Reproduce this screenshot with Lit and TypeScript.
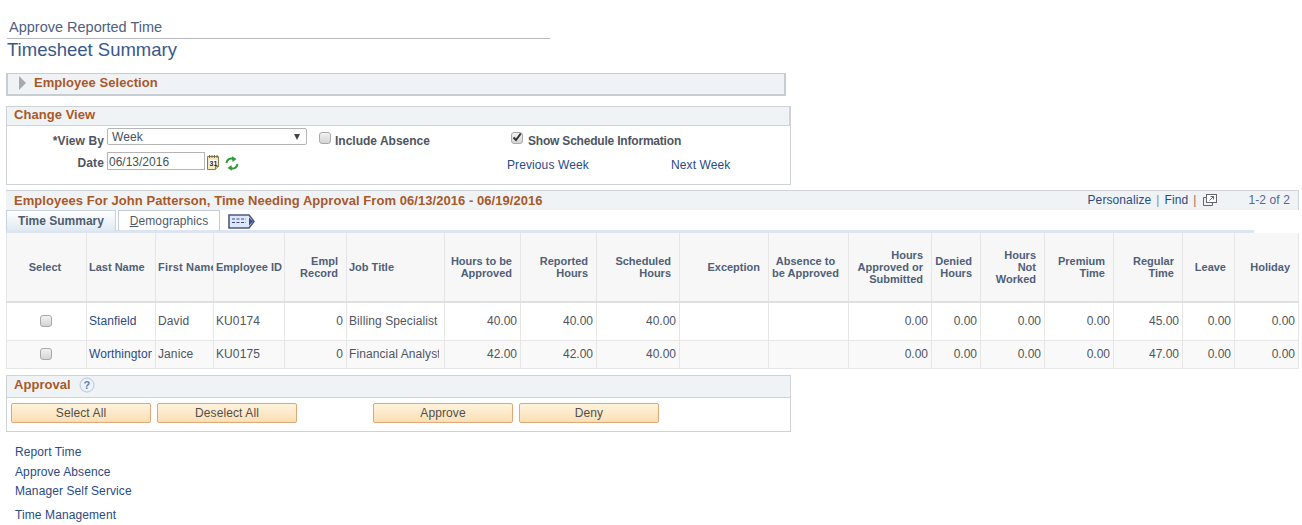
import { LitElement, html, css } from "lit";
import { customElement } from "lit/decorators.js";

const cols = [80, 69, 58, 71, 62, 98, 76, 76, 83, 89, 80, 83, 49, 64, 69, 69, 52, 64];
const heads: [string, string][] = [
  ["Select", "c sel-h"], ["Last Name", "l"], ["First Name", "l fn"], ["Employee ID", "l"], ["Empl<br>Record", "r"],
  ["Job Title", "l"], ["Hours to be<br>Approved", "r"], ["Reported<br>Hours", "r"], ["Scheduled<br>Hours", "r"],
  ["Exception", "r"], ["Absence to<br>be Approved", "c"], ["Hours<br>Approved or<br>Submitted", "r"],
  ["Denied<br>Hours", "r"], ["Hours<br>Not<br>Worked", "r"], ["Premium<br>Time", "r"], ["Regular<br>Time", "r"],
  ["Leave", "r"], ["Holiday", "r"],
];
const rows = [
  ["Stanfield", "David", "KU0174", "0", "Billing Specialist", "40.00", "40.00", "40.00", "", "", "0.00", "0.00", "0.00", "0.00", "45.00", "0.00", "0.00"],
  ["Worthington", "Janice", "KU0175", "0", "Financial Analyst", "42.00", "42.00", "40.00", "", "", "0.00", "0.00", "0.00", "0.00", "47.00", "0.00", "0.00"],
];

@customElement("app-root")
export class AppRoot extends LitElement {
  static styles = css`
    :host { display: block; width: 1302px; height: 525px; overflow: hidden; background: #fff; font-family: "Liberation Sans", Arial, sans-serif; font-size: 12px; color: #4f5560; letter-spacing: 0.1px; }
    a { color: #2a4a86; text-decoration: none; }
    .crumb { margin: 18px 0 0 7px; width: 543px; height: 21px; box-sizing: border-box; padding-left: 2px; border-bottom: 1px solid #b4b8bd; font-size: 14.5px; line-height: 19px; color: #50607f; letter-spacing: 0; }
    h1 { margin: 0 0 0 7px; font-weight: normal; font-size: 18.5px; line-height: 21px; height: 34px; box-sizing: border-box; color: #37598a; letter-spacing: 0; }
    .sel { margin: 0 0 0 6px; width: 780px; height: 23px; box-sizing: border-box; background: #f0f3f5; border: 1px solid #c8cdd4; border-width: 1px 2px 2px 2px; display: flex; align-items: center; gap: 8px; padding: 0 0 4px 11px; }
    .tri { width: 0; height: 0; margin-top: 2px; border-style: solid; border-width: 7px 0 7px 7px; border-color: transparent transparent transparent #a9a9a9; }
    .ttl { font-weight: bold; font-size: 13px; color: #a8592a; letter-spacing: 0.05px; }
    .cv { margin: 10px 0 0 6px; width: 785px; height: 79px; box-sizing: border-box; border: 1px solid #cfd3d8; }
    .cvh { height: 18px; background: #f0f3f5; border-bottom: 1px solid #cdd2d8; border-right: 1px solid #cdd2d8; padding-left: 7px; line-height: 15px; }
    .cvb { display: grid; grid-template-columns: 100px 208px 192px 164px 1fr; grid-template-rows: 24px 24px; padding-top: 3px; align-items: center; }
    .lab { font-weight: bold; text-align: right; padding-right: 3px; margin-bottom: 1px; }
    .lab.d { margin-bottom: 5px; }
    .selbox { width: 200px; height: 17px; align-self: start; margin-top: -1px; box-sizing: border-box; border: 1px solid #b5b5b5; border-radius: 2px; display: flex; align-items: center; justify-content: space-between; padding: 1px 6px 0 4px; color: #4a4f58; }
    .arr { width: 0; height: 0; margin-top: -1px; border-style: solid; border-width: 6px 3px 0 3px; border-color: #444 transparent transparent transparent; }
    .datewrap { display: flex; align-items: flex-start; align-self: start; margin-top: -1px; }
    .date { width: 98px; height: 18px; box-sizing: border-box; border: 1px solid #b5b5b5; padding: 2px 0 0 1px; color: #4a4f58; line-height: 14px; margin-right: 2px; letter-spacing: 0; }
    .cal { margin-top: 3px; }
    .ref { margin: 4px 0 0 5px; }
    .chk { appearance: none; display: block; width: 12px; height: 12px; box-sizing: border-box; margin: 0; border: 1px solid #a9a9a9; border-radius: 3px; background: linear-gradient(#f2f2f2, #d4d4d4); }
    .ck { display: flex; align-items: center; font-weight: bold; white-space: nowrap; padding-left: 4px; letter-spacing: 0; }
    .ck .chkw { position: relative; margin: 0 4px 7px 0; }
    .ck.s { letter-spacing: -0.2px; }
    .ck.s .chkw { margin-right: 5px; }
    .ck svg.tick { position: absolute; left: 1px; top: 0; }
    .grid { margin: 5px 0 0 6px; width: 1293px; height: 179px; box-sizing: border-box; }
    .gh { height: 20px; box-sizing: border-box; background: #f0f3f5; border-top: 1px solid #cfd3d8; border-right: 1px solid #cfd3d8; display: flex; align-items: center; padding: 0 8px 0 8px; }
    .gh .ttl { flex: 1; }
    .ghr { display: flex; align-items: center; margin-bottom: 2px; }
    .ghr .sep { margin: 0 5px; color: #888; }
    .ghr .sep.red { color: #a8694f; }
    .ghr .cnt { margin-left: 32px; color: #4e6a96; }
    .tabs { height: 20px; display: flex; align-items: stretch; gap: 2px; width: 1248px; border-bottom: 3px solid #dde6f0; }
    .tab { box-sizing: border-box; height: 21px; display: flex; align-items: center; justify-content: center; border: 1px solid #c4ccd6; border-bottom: none; }
    .tab.on { width: 110px; font-weight: bold; background: linear-gradient(#fff, #dfe9f3); border-color: #c9d3de; color: #4d5c70; letter-spacing: 0; }
    .tab.off { width: 102px; color: #4f5a6b; }
    .tabicon { margin: 4px 0 0 6px; }
    table { border-collapse: collapse; table-layout: fixed; width: 1292px; }
    th { height: 69px; box-sizing: border-box; padding: 0 8px 0 2px; background: #f7f7f7; border-left: 1px solid #e6e6e6; border-right: 1px solid #e6e6e6; border-bottom: 2px solid #e0e0e0; font-size: 11px; line-height: 12px; color: #4f5f79; font-weight: bold; white-space: nowrap; overflow: hidden; letter-spacing: 0; }
    th.sel-h { padding: 0 3px 0 0; }
    th.fn { letter-spacing: 0.2px; padding-right: 0; }
    td { box-sizing: border-box; padding: 0 3px 0 2px; border: 1px solid #e6e6e6; white-space: nowrap; }
    td div { overflow: hidden; }
    td:nth-child(6) div { margin-right: 2px; }
    tr.a td { height: 38px; background: #fff; }
    tr.b td { height: 28px; background: #f9f9f9; padding-bottom: 1px; }
    tr.b td.cb { padding-bottom: 0; }
    .c { text-align: center; }
    .l { text-align: left; }
    .r { text-align: right; }
    td.r { letter-spacing: 0; }
    td .chk { margin: auto; }
    .ap { margin: 6px 0 0 6px; width: 785px; height: 57px; box-sizing: border-box; border: 1px solid #cfd3d8; }
    .aph { height: 22px; background: #f0f3f5; border-bottom: 1px solid #cdd2d8; padding: 0 0 4px 7px; box-sizing: border-box; display: flex; align-items: center; gap: 8px; }
    .aph svg { margin-top: 1px; }
    .btns { display: flex; padding: 5px 0 0 4px; }
    .btn { width: 140px; height: 20px; box-sizing: border-box; border: 1px solid #e0a878; border-radius: 2px; background: linear-gradient(#fff3dc, #fbdfb4); color: #4f4f4f; display: flex; align-items: center; justify-content: center; padding-bottom: 1px; margin-right: 6px; }
    .btn.gapped { margin-left: 70px; }
    .links { margin: 13px 0 0 15px; display: flex; flex-direction: column; }
    .links a { line-height: 14px; height: 20px; }
    .links a.short { height: 19px; }
    .links a.last { margin-top: 4px; }
  `;

  render() {
    return html`
      <div class="crumb">Approve Reported Time</div>
      <h1>Timesheet Summary</h1>
      <div class="sel"><span class="tri"></span><span class="ttl">Employee Selection</span></div>
      <div class="cv">
        <div class="cvh"><span class="ttl">Change View</span></div>
        <div class="cvb">
          <div class="lab">*View By</div>
          <div class="selbox"><span>Week</span><span class="arr"></span></div>
          <label class="ck"><span class="chkw"><input class="chk" type="checkbox" /></span>Include Absence</label>
          <label class="ck s"><span class="chkw"><input class="chk" type="checkbox" /><svg class="tick" width="10" height="10" viewBox="0 0 10 10"><path d="M1.5 5.5 4 8 8.8 1.5" fill="none" stroke="#333" stroke-width="2"/></svg></span>Show Schedule Information</label>
          <div></div>
          <div class="lab d">Date</div>
          <div class="datewrap"><span class="date">06/13/2016</span>
            <svg class="cal" width="13" height="15" viewBox="0 0 13 15"><path d="M.5 1.5h11v10l-3 3H.5z" fill="#f5e9c0" stroke="#8d7a4a"/><path d="M2.5 0v3M5 0v3M7.5 0v3M10 0v3" stroke="#666"/><rect x="2.5" y="5" width="7" height="6" fill="#fff"/><text x="2.5" y="11" font-size="7" font-weight="bold" fill="#222" font-family="Liberation Sans">31</text><path d="M8.5 14.5v-3h3" fill="#e0cf9a" stroke="#8d7a4a"/></svg>
            <svg class="ref" width="14" height="15" viewBox="0 0 14 15"><path d="M1.5 7C2 3.5 5 1.8 8.5 3" fill="none" stroke="#2f9a3c" stroke-width="2"/><path d="M7 .2 11.5 3 7.5 6z" fill="#2f9a3c"/><path d="M12.5 8C12 11.5 9 13.2 5.5 12" fill="none" stroke="#2f9a3c" stroke-width="2"/><path d="M7 14.8 2.5 12 6.5 9z" fill="#2f9a3c"/></svg>
          </div>
          <div></div>
          <div><a href="#">Previous Week</a></div>
          <div><a href="#">Next Week</a></div>
        </div>
      </div>
      <div class="grid">
        <div class="gh"><span class="ttl">Employees For John Patterson, Time Needing Approval From 06/13/2016 - 06/19/2016</span>
          <div class="ghr"><a href="#">Personalize</a><span class="sep">|</span><a href="#">Find</a><span class="sep red">|</span>
            <svg width="15" height="14" viewBox="0 0 15 14"><rect x="4.5" y="1.5" width="10" height="8" fill="#fff" stroke="#666"/><path d="M4.5 4.5H1.5v8h9v-3" fill="none" stroke="#666"/><path d="M7.5 7.5l4-4M8.5 3.5h3v3" fill="none" stroke="#666"/></svg>
            <span class="cnt">1-2 of 2</span></div>
        </div>
        <div class="tabs">
          <div class="tab on">Time Summary</div>
          <div class="tab off"><span><u>D</u>emographics</span></div>
          <svg class="tabicon" width="27" height="15" viewBox="0 0 27 15"><path d="M1 1h20l5 6.5-5 6.5H1z" fill="#dfe8fb" stroke="#4d5880" stroke-width="1.6"/><path d="M4 5h14M4 8.500h14" stroke="#3c4c90" stroke-dasharray="3 1.500"/><path d="M21 3.500l4 4-4 4z" fill="#3c4c90"/></svg>
        </div>
        <table>
          <colgroup>${cols.map((w) => html`<col style="width:${w}px" />`)}</colgroup>
          <thead><tr>${heads.map(([t, a]) => html`<th class=${a} .innerHTML=${t}></th>`)}</tr></thead>
          <tbody>
            ${rows.map((r, i) => html`<tr class=${i ? "b" : "a"}>
              <td class="c cb"><input class="chk" type="checkbox" /></td>
              ${r.map((v, j) => j < 3 || j === 4
                ? html`<td class="l"><div>${j === 0 ? html`<a href="#">${v}</a>` : v}</div></td>`
                : html`<td class="r">${v}</td>`)}
            </tr>`)}
          </tbody>
        </table>
      </div>
      <div class="ap">
        <div class="aph"><span class="ttl">Approval</span>
          <svg width="16" height="16" viewBox="0 0 16 16"><circle cx="8" cy="8" r="7" fill="#eef3fa" stroke="#b4c6de"/><text x="8" y="12" text-anchor="middle" font-size="11" font-weight="bold" fill="#5a84b8" font-family="Liberation Sans">?</text></svg>
        </div>
        <div class="btns">
          <div class="btn">Select All</div><div class="btn">Deselect All</div>
          <div class="btn gapped">Approve</div><div class="btn">Deny</div>
        </div>
      </div>
      <div class="links">
        <a href="#">Report Time</a><a class="short" href="#">Approve Absence</a><a href="#">Manager Self Service</a><a class="last" href="#">Time Management</a>
      </div>
    `;
  }
}
